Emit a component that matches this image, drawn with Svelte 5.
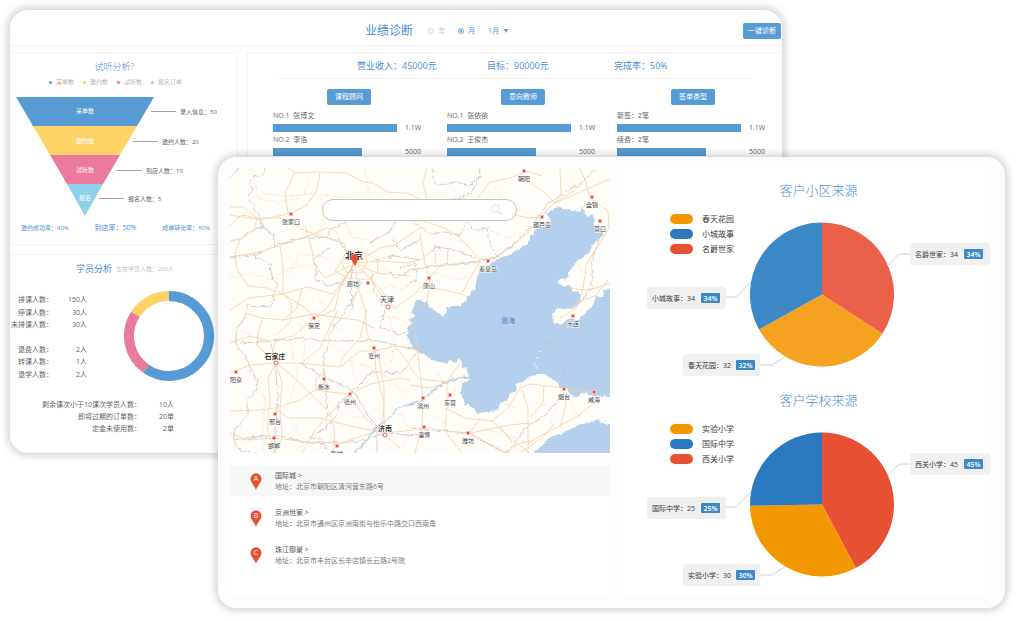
<script>
  let period = 'month';
  let month = '1月';
  let keyword = '';

  const funnelLegend = [
    { name: '采单数', color: '#579bd4' },
    { name: '邀约数', color: '#fdd367' },
    { name: '试听数', color: '#ec7a9c' },
    { name: '报名订单', color: '#8dd2ea' }
  ];

  const funnel = [
    { name: '采单数', note: '录入信息：50', color: '#579bd4', points: '0,0 138,0 121,29 17,29', y: 14, line: 135 },
    { name: '邀约数', note: '邀约人数：20', color: '#fdd367', points: '17,29 121,29 104,58 34,58', y: 44, line: 117 },
    { name: '试听数', note: '到店人数：10', color: '#ec7a9c', points: '34,58 104,58 87,87 51,87', y: 73, line: 101 },
    { name: '报名', note: '报名人数：5', color: '#8dd2ea', points: '51,87 87,87 69,119', y: 101, line: 83 }
  ];

  const students = [
    ['排课人数：', '150人'],
    ['停课人数：', '30人'],
    ['未排课人数：', '30人'],
    ['', ''],
    ['退费人数：', '2人'],
    ['转课人数：', '1人'],
    ['退学人数：', '2人']
  ];

  const orders = [
    ['剩余课次小于10课次学员人数：', '10人'],
    ['即将过期的订单数：', '20单'],
    ['定金未使用数：', '2单']
  ];

  // start / length in degrees, clockwise from the top
  const ring = [
    { start: 0, size: 215, color: '#579bd4' },
    { start: 215, size: 88, color: '#ec7a9c' },
    { start: 303, size: 57, color: '#fdd367' }
  ];

  const rankings = [
    { title: '课程顾问', rows: [['NO.1  张博文', 100, '1.1W'], ['NO.2  李浩', 72, '5000']] },
    { title: '意向教师', rows: [['NO.1  张依依', 100, '1.1W'], ['NO.2  王俊杰', 72, '5000']] },
    { title: '签单类型', rows: [['新签：2笔', 100, '1.1W'], ['续费：2笔', 72, '5000']] }
  ];

  const places = [
    { mark: 'A', name: '国际城', address: '北京市朝阳区清河营东路6号' },
    { mark: 'B', name: '京洲世家', address: '北京市通州区京洲南街与怡乐中路交口西南角' },
    { mark: 'C', name: '珠江御景', address: '北京市丰台区长辛店镇长云路2号院' }
  ];

  const slots = [
    { x: 293, y: 43, w: 80, badge: 347, leader: '271,65 282,54 293,54' },
    { x: 30, y: 87, w: 79, badge: 84, leader: '134,82 119,97 109,97' },
    { x: 66, y: 154, w: 77, badge: 119, leader: '169,156 155,165 143,165' }
  ];

  const sources = [
    {
      title: '客户小区来源',
      legend: ['春天花园', '小城故事', '名爵世家'],
      wedges: [[0, 123, '#eb6049'], [123, 241, '#f4a220'], [241, 360, '#3d88c7']],
      notes: [['名爵世家', 34], ['小城故事', 34], ['春天花园', 32]]
    },
    {
      title: '客户学校来源',
      legend: ['实验小学', '国际中学', '西关小学'],
      wedges: [[0, 152, '#e85034'], [152, 269, '#f39700'], [269, 360, '#2c78be']],
      notes: [['西关小学', 45], ['国际中学', 25], ['实验小学', 30]]
    }
  ];
  const legendColors = ['#f39700', '#2c78be', '#e85034'];

  function wedge(from, to, cx = 205, cy = 94.5, r = 72) {
    const at = (deg) => {
      const a = (deg * Math.PI) / 180;
      return `${cx + r * Math.sin(a)} ${cy - r * Math.cos(a)}`;
    };
    return `M${cx} ${cy}L${at(from)}A${r} ${r} 0 ${to - from > 180 ? 1 : 0} 1 ${at(to)}Z`;
  }

  const cities = [
    { name: '朝阳', x: 294, y: 3 },
    { name: '盘锦', x: 362, y: 29 },
    { name: '葫芦岛', x: 312, y: 49 },
    { name: '营口', x: 370, y: 53 },
    { name: '秦皇岛', x: 258, y: 93 },
    { name: '唐山', x: 199, y: 110 },
    { name: '张家口', x: 61, y: 46 },
    { name: '保定', x: 84, y: 150 },
    { name: '沧州', x: 144, y: 180 },
    { name: '阳泉', x: 6, y: 204 },
    { name: '衡水', x: 94, y: 211 },
    { name: '德州', x: 120, y: 226 },
    { name: '邢台', x: 45, y: 246 },
    { name: '邯郸', x: 44, y: 270 },
    { name: '聊城', x: 107, y: 278 },
    { name: '滨州', x: 193, y: 230 },
    { name: '东营', x: 220, y: 227 },
    { name: '淄博', x: 194, y: 259 },
    { name: '潍坊', x: 238, y: 265 },
    { name: '烟台', x: 334, y: 221 },
    { name: '威海', x: 364, y: 224 },
    { name: '大连', x: 343, y: 148 }
  ];

  const borders = [
    'M35 0L33 7L22 9L20 14L23 20L18 30L27 44L33 59L43 67L45 79L23 87L7 89L0 89',
    'M23 87L40 97L42 109L47 115L43 132L40 139L17 137L15 149L7 160L5 174L10 182L18 192L20 200L28 212L25 222L17 232L17 249L5 262L3 272L10 282L27 285',
    'M0 73L12 70L20 62L33 59M0 9L9 1',
    'M140 74L160 64L162 58L167 52M117 54L100 62L98 69',
    'M87 99L83 92L93 84L100 80M87 99L85 110L97 117L110 115L118 118',
    'M47 77L73 70L97 69L113 75L123 92L121 115L122 142',
    'M203 0L202 8L207 17L227 14L240 18L250 8L249 0M250 8L240 26L220 34',
    'M180 50L200 66L216 64L230 68L237 54L245 62L258 60L260 75L268 89',
    'M145 92L165 88L192 92L205 79L227 82L250 92L268 89L280 79L303 57L318 35L332 27L350 16L367 0',
    'M155 100L165 110L180 102L213 97L250 94',
    'M372 62L366 80L362 92L362 119L350 135',
    'M142 105L145 125L155 142L150 160L170 166L177 164',
    'M10 175L40 173L67 170L100 173L143 172L190 182L187 184L172 205L142 204L122 224',
    'M97 285L92 272L80 270L97 259L96 222L93 195L100 165L123 132L132 110',
    'M45 192L48 230L45 265L44 285M70 195L97 210L122 222L147 260L147 285',
    'M3 272L45 267L80 275L125 274L158 265L190 268',
    'M97 259L108 245L109 232L122 228',
    'M180 260L237 265L257 275L277 285L297 259L315 247L335 225',
    'M323 157L330 182L337 219M311 174L322 174',
    'M170 100L185 95L188 112L175 118M190 72L170 82L163 70'
  ];

  const roads = [
    'M58 0L66 5L90 4L117 5L133 14L143 15L157 24L177 25L190 31',
    'M65 4L55 25L58 45L62 45M90 5L87 22L77 37L62 45L30 52L0 47',
    'M0 39L13 39L27 50L53 50L73 62L97 70L110 74L125 95',
    'M0 57L12 47L27 50L24 62L10 72L5 85L7 102L18 118L37 120L53 126L77 119L103 126L125 95',
    'M0 89L30 84L50 77L73 70L98 60L106 63L112 78L125 95',
    'M50 77L53 99L53 126L62 136L60 155L46 167M75 58L82 82L84 96L95 110L125 95',
    'M0 142L18 130L53 126M53 126L78 142L84 150L97 140L125 95',
    'M125 95L152 93L178 95L190 92M125 95L150 80L165 77L190 60',
    'M125 95L140 110L148 122L158 137M125 95L147 105L180 108M125 95L150 120L166 142',
    'M125 95L110 118L105 142L84 150L63 168L46 172L40 192',
    'M125 95L128 120L135 142L137 165L144 180L146 205L154 235L152 258',
    'M105 103L112 92L116 85L130 83L138 86L147 92L148 104L138 112L118 110Z',
    'M112 95L125 85L137 93L132 105L116 104Z',
    'M197 0L193 15L197 32M248 30L260 14L280 10L297 3L312 8',
    'M290 5L300 15L314 24L325 35L350 24L380 11M330 0L331 27M350 0L356 15L360 30',
    'M190 66L195 97L200 110L197 135L180 145',
    'M312 49L298 65L280 79L265 90L250 92L238 78L228 68L215 60L190 52',
    'M165 140L185 126L199 110L210 98L250 93',
    'M205 82L206 98M218 82L217 96M199 120L215 122L235 127M250 94L240 110L232 125',
    'M285 47L300 50L312 49L320 38L345 22M360 30L378 43L379 60L370 75L357 95L353 120L346 140L330 150',
    'M340 120L352 122L366 120L380 115M340 140L352 132L365 128L378 112',
    'M0 175L20 168L40 173L46 195M0 205L20 197L46 195L70 195L110 199L130 183L144 183L165 178L190 182',
    'M15 145L32 150L53 152L84 146L110 150L128 152L144 160',
    'M32 152L28 165L27 178L46 195L60 206L80 225L100 245L105 265L103 285',
    'M46 195L38 210L40 230L37 260L45 285M46 195L52 215L50 240L52 270L45 285',
    'M0 243L30 242L45 240L70 232L94 216L94 211',
    'M45 240L58 250L90 250L120 258L155 265L185 262L194 259L215 263L240 265L280 257L300 255',
    'M94 205L86 210L86 222L100 224L120 226L140 216L170 210L180 212',
    'M120 226L135 250L147 260L155 267L170 280M120 226L105 240L85 262L72 285M72 195L90 180L108 142',
    'M0 265L18 272L44 270L80 274L110 275L150 262',
    'M178 150L185 165L188 185L190 205L193 230L192 260L185 285',
    'M144 180L150 195L154 220L154 248L155 262M166 180L175 190L183 203L190 211L217 214L230 195',
    'M180 217L200 220L217 214L217 240L215 263L232 285',
    'M215 240L235 250L262 253L278 240L290 220L300 216L335 220L364 224',
    'M240 265L265 280L280 285M262 253L280 270L300 285M292 222L298 240L298 285',
    'M240 265L250 250M298 275L325 260L345 250L364 235L367 226M337 225L335 240L330 260',
    'M290 285L312 270L325 255M314 218L313 235L300 250M270 258L282 275M276 285L290 275L300 273',
    'M53 152L67 140L72 120M110 199L112 190L130 170L137 142'
  ];

  const lanes = [
    'M20 0L28 30L50 34L70 30M0 110L20 105L40 112L60 100L85 96M60 105L70 85L100 90M30 25L55 28L80 26L120 30',
    'M90 30L95 55L88 64M135 2L140 30M165 30L170 50M115 55L122 70L150 72M0 160L20 165L35 185M60 175L68 205L60 235',
    'M70 155L75 180L72 195M100 175L120 190L125 215M160 150L165 175L160 200M130 195L150 205L175 225M110 245L130 250L150 240',
    'M10 190L30 220L10 240M60 250L75 275L60 285M170 245L180 265L170 285M200 245L215 255M20 205L35 230L32 285',
    'M210 30L235 45L260 42M265 20L280 40L300 45M255 60L280 70L300 60M215 70L235 75M340 5L345 20M205 105L225 112L240 108',
    'M250 262L275 265L295 275M305 235L325 240L320 255M340 235L350 250M270 235L285 240L300 230M225 215L222 240M200 195L212 212',
    'M80 5L75 25L60 32M155 45L165 60M140 125L160 118L178 122M90 130L100 155L115 165M345 95L355 105M150 148L168 150L180 158'
  ];

  const sea =
    'M183 139L186 133L190 131L193 134L198 134L199 139L205 142L209 147L213 148L217 144L215 141L223 138L229 138L235 134L239 126L246 120L248 110L249 103L258 97L263 93L272 89L280 87L287 82L293 80L298 75L302 66L308 60L314 58L320 52L317 46L322 41L330 39L336 42L338 41L347 44L351 43L353 38L355 45L358 48L363 46L364 55L367 59L372 60L373 66L366 74L362 77L360 84L352 89L348 92L342 100L339 102L339 109L330 112L328 115L333 118L340 116L342 124L348 123L352 132L345 139L335 141L327 140L323 145L324 157L332 155L338 151L348 153L353 147L363 137L366 128L372 129L375 122L390 118L390 229L380 229L365 227L353 225L345 229L340 227L337 220L330 220L327 213L323 212L315 206L308 206L297 210L292 214L287 215L286 222L280 226L277 232L270 236L268 243L258 244L247 245L242 238L235 236L231 225L232 216L239 211L237 201L233 199L230 191L226 195L220 193L215 195L203 192L195 187L187 184L182 177L177 169L179 165L176 160L182 155L181 150L185 148L182 144ZM390 256L380 256L372 256L368 252L362 254L352 256L343 260L333 265L323 268L317 271L314 276L312 279L306 281L302 292L390 292Z';
</script>

<div class="stage">
  <section class="window back">
    <header class="topbar">
      <h1>业绩诊断</h1>
      <label class="choice" class:dim={period != 'year'}>
        <input type="radio" name="period" value="year" bind:group={period} />年
      </label>
      <label class="choice" class:dim={period != 'month'}>
        <input type="radio" name="period" value="month" bind:group={period} />月
      </label>
      <div class="month">
        <select aria-label="月份" bind:value={month}>
          <option>1月</option>
          <option>2月</option>
          <option>3月</option>
        </select>
        <svg width="4" height="4" viewBox="0 0 4 4"><path d="M0 0H4L2 4Z" fill="#4a8fd0" /></svg>
      </div>
      <button class="btn run">一键诊断</button>
    </header>

    <div class="body">
      <div class="side">
        <section class="card trial">
          <h2>试听分析?</h2>
          <ul class="dots">
            {#each funnelLegend as item}
              <li><i style="background: {item.color}"></i>{item.name}</li>
            {/each}
          </ul>
          <svg class="funnel" width="212" height="120" viewBox="0 0 212 120">
            {#each funnel as step}
              <polygon points={step.points} fill={step.color} />
              <text class="step" x="69" y={step.y + 2}>{step.name}</text>
              <path d="M{step.line} {step.y + 0.5}h25" stroke="#a3a3a3" />
              <text class="note" x={step.line + 29} y={step.y + 3}>{step.note}</text>
            {/each}
          </svg>
          <div class="rates">
            <span>邀约成功率：40%</span>
            <strong>到店率：50%</strong>
            <span>成单转化率：50%</span>
          </div>
        </section>

        <section class="card pupils">
          <div class="heading">
            <h2>学员分析</h2>
            <span>在校学员人数：200人</span>
          </div>
          <div class="split">
            <table class="counts">
              <tbody>
                {#each students as row}
                  <tr><th>{row[0]}</th><td>{row[1]}</td></tr>
                {/each}
              </tbody>
            </table>
            <svg width="90" height="90" viewBox="0 0 90 90">
              {#each ring as arc}
                <circle
                  cx="45" cy="45" r="40" fill="none" stroke={arc.color} stroke-width="10"
                  pathLength="360" stroke-dasharray="{arc.size} 360"
                  transform="rotate({arc.start - 90} 45 45)"
                />
              {/each}
            </svg>
          </div>
          <table class="counts orders">
            <tbody>
              {#each orders as row}
                <tr><th>{row[0]}</th><td>{row[1]}</td></tr>
              {/each}
            </tbody>
          </table>
        </section>
      </div>

      <section class="card results">
        <div class="totals">
          <span>营业收入：45000元</span>
          <span>目标：90000元</span>
          <span>完成率：50%</span>
        </div>
        <div class="rankings">
          {#each rankings as group}
            <div class="ranking">
              <button class="btn">{group.title}</button>
              {#each group.rows as row}
                <div class="who">{row[0]}</div>
                <div class="score">
                  <div class="track"><div class="bar" style="width: {row[1]}%"></div></div>
                  <span>{row[2]}</span>
                </div>
              {/each}
            </div>
          {/each}
        </div>
      </section>
    </div>
  </section>

  <section class="window front">
    <div class="where">
      <div class="map">
        <svg viewBox="0 0 380 285">
          <defs>
            <filter id="rough" filterUnits="userSpaceOnUse" x="-10" y="-10" width="400" height="305" color-interpolation-filters="sRGB">
              <feTurbulence type="fractalNoise" baseFrequency="0.2" numOctaves="2" seed="4" />
              <feDisplacementMap in="SourceGraphic" scale="5" xChannelSelector="R" yChannelSelector="G" />
            </filter>
          </defs>
          <rect width="380" height="285" fill="#fffdf8" />
          <g filter="url(#rough)">
            <path d={sea} fill="#b4d0ed" />
            <path d="M304 195l3 6M308 181l3 2M306 190h2" stroke="#fffdf8" />
            <path d="M125 285L137 272L145 260L160 249L170 239L187 234L193 232L207 220L220 212L235 209L245 211" class="river" />
            {#each lanes as d}<path {d} class="lane" />{/each}
            {#each borders as d}<path {d} class="border" />{/each}
          </g>
          {#each roads as d}<path {d} class="road" />{/each}

          {#each cities as city}
            <rect x={city.x - 2} y={city.y - 2} width="4" height="4" rx="1" fill="#f8b5ac" />
            <rect x={city.x - 1} y={city.y - 1} width="2" height="2" fill="#e8473c" />
            <text x={city.x} y={city.y + 10}>{city.name}</text>
          {/each}
          <rect x="136" y="113" width="4" height="4" rx="1" fill="#f8b5ac" />
          <rect x="137" y="114" width="2" height="2" fill="#e8473c" />
          <text x="123" y="118">廊坊</text>
          <g fill="#fff" stroke="#e8675c">
            <circle cx="158" cy="139" r="2" />
            <circle cx="46" cy="195" r="2" />
            <circle cx="155" cy="267" r="2" />
          </g>
          <text class="mid" x="157" y="134">天津</text>
          <text class="mid dark" x="45" y="191">石家庄</text>
          <text class="mid dark" x="155" y="263">济南</text>
          <text class="water" x="278" y="155">渤海</text>
          <text class="capital" x="124" y="91">北京</text>
          <path d="M125 98C123 94 121 92 121 89.500A3.500 3.500 0 0 1 128 89.500C128 92 127 94 125 98Z" fill="#e85034" />
        </svg>
        <div class="search">
          <input type="text" aria-label="搜索地址" bind:value={keyword} />
          <svg width="12" height="12" viewBox="0 0 12 12" fill="none" stroke="#dedede">
            <circle cx="4.500" cy="4.500" r="3.800" />
            <path d="M7.300 7.300L11 11" stroke-width="1.400" />
          </svg>
        </div>
      </div>

      <ul class="places">
        {#each places as place, i}
          <li class:active={i == 0}>
            <svg width="12" height="17" viewBox="0 0 12 17">
              <path d="M6 17C4.500 12.500 .5 9.500 .5 5.800A5.500 5.500 0 0 1 11.500 5.800C11.500 9.500 7.500 12.500 6 17Z" fill="#e85034" />
              <text x="6" y="8">{place.mark}</text>
            </svg>
            <div>
              <a href="#{place.mark}">{place.name} &gt;</a>
              <p>地址：{place.address}</p>
            </div>
          </li>
        {/each}
      </ul>
    </div>

    <div class="sources">
      {#each sources as source}
        <section class="source">
          <h2>{source.title}</h2>
          <div class="chart">
            <svg viewBox="0 0 374 178">
              {#each source.wedges as [from, to, color]}
                <path d={wedge(from, to)} fill={color} />
              {/each}
              {#each slots as slot, i}
                <polyline points={slot.leader} fill="none" stroke="#d2d2d2" />
                <rect x={slot.x} y={slot.y} width={slot.w} height="22" rx="3" fill="#f0f0f0" />
                <text x={slot.x + 5} y={slot.y + 14}>{source.notes[i][0]}：{source.notes[i][1]}</text>
                <rect x={slot.badge} y={slot.y + 6} width="19" height="10" rx="1" fill="#3d88c7" />
                <text class="percent" x={slot.badge + 9.5} y={slot.y + 14}>{source.notes[i][1]}%</text>
              {/each}
            </svg>
            <ul class="legend">
              {#each source.legend as name, i}
                <li><i style="background: {legendColors[i]}"></i>{name}</li>
              {/each}
            </ul>
          </div>
        </section>
      {/each}
    </div>
  </section>
</div>

<style>
  :global(body) {
    background: #fff;
  }
  .stage {
    display: grid;
    grid-template-columns: 208px 1fr 223px;
    grid-template-rows: 147px auto;
    align-items: start;
    padding: 10px 12px 13px 10px;
    font-family: "Open Sans", "Noto Sans CJK SC", sans-serif;
    font-size: 7px;
    line-height: 12px;
    color: #66625f;
  }
  h1, h2, p, ul {
    margin: 0;
    padding: 0;
    font-weight: 300;
    list-style: none;
  }
  svg {
    display: block;
  }
  .window {
    border-radius: 18px;
    overflow: hidden;
    box-shadow: 0 0 9px 2px rgba(0, 0, 0, 0.2);
  }
  .back {
    grid-column: 1 / 3;
    grid-row: 1 / 3;
    background: #fff;
  }
  .front {
    grid-column: 2 / 4;
    grid-row: 2;
    display: grid;
    grid-template-columns: 380fr 374fr;
    gap: 7px;
    padding: 11px 14px 11px 12px;
    background: #fdfdfd;
  }

  /* top bar */
  .topbar {
    display: flex;
    align-items: center;
    height: 29px;
    padding: 6px 1px 0 46%;
    border-bottom: 1px solid #f3f3f3;
  }
  h1 {
    margin-right: 15px;
    font-size: 12px;
    font-weight: 400;
    line-height: 16px;
    color: #4a8fd0;
  }
  .choice {
    display: flex;
    align-items: center;
    gap: 4px;
    margin-right: 13px;
    color: #4a8fd0;
  }
  .choice.dim {
    color: #c8c8c8;
  }
  .choice input {
    appearance: none;
    box-sizing: border-box;
    width: 6px;
    height: 6px;
    margin: 0;
    border: 1px solid #d5d5d5;
    border-radius: 50%;
  }
  .choice input:checked {
    border-color: #8fb9e2;
    background: #4a8fd0;
    box-shadow: inset 0 0 0 1px #fff;
  }
  .month {
    display: flex;
    align-items: center;
    gap: 4px;
  }
  .month select {
    appearance: none;
    padding: 0;
    border: none;
    background: none;
    font: inherit;
    color: #4a8fd0;
  }
  .btn {
    padding: 0 8px;
    border: none;
    border-radius: 2px;
    background: #579bd4;
    font: inherit;
    line-height: 16px;
    color: #fff;
    cursor: pointer;
  }
  .run {
    margin-left: auto;
    padding: 0 5px;
  }

  .body {
    display: grid;
    grid-template-columns: 228px 1fr;
    gap: 9px;
    margin-top: 6px;
  }
  .card {
    border: 1px solid #f3f3f3;
  }
  h2 {
    font-size: 9px;
    line-height: 14px;
    color: #4a8fd0;
  }

  /* funnel */
  .trial {
    border-left: none;
    padding: 7px 0 10px;
    margin-bottom: 9px;
  }
  .trial h2 {
    padding-right: 18px;
    text-align: center;
  }
  .dots {
    display: flex;
    gap: 9px;
    padding: 2px 0 0 39px;
    font-size: 6px;
    line-height: 12px;
    color: #8d8a88;
  }
  .dots li {
    display: flex;
    align-items: center;
    gap: 4px;
  }
  .dots i {
    width: 3px;
    height: 3px;
    border-radius: 50%;
  }
  .funnel {
    margin: 9px 0 0 6px;
    font-size: 6px;
  }
  .funnel .step {
    fill: #fff;
    text-anchor: middle;
  }
  .funnel .note {
    fill: #66625f;
  }
  .rates {
    display: flex;
    justify-content: space-between;
    padding: 5px 27px 0 11px;
    font-size: 6px;
    color: #4a8fd0;
  }
  .rates strong {
    font-size: 7px;
    font-weight: 400;
  }

  /* pupils */
  .pupils {
    border-left: none;
    border-bottom: none;
    padding: 7px 0 18px;
  }
  .heading {
    display: flex;
    align-items: center;
    gap: 4px;
    padding-left: 66px;
    font-size: 6px;
    color: #c4c4c4;
  }
  .pupils h2 {
    font-weight: 400;
  }
  .split {
    display: flex;
    gap: 37px;
    margin-top: 15px;
  }
  .counts {
    width: 77px;
    margin-top: 3px;
    border-collapse: collapse;
  }
  .counts th, .counts td {
    height: 12px;
    padding: 0;
    font-weight: 400;
    text-align: right;
    white-space: nowrap;
  }
  .counts th {
    width: 43px;
  }
  .orders {
    width: 164px;
    margin-top: 18px;
  }
  .orders th {
    width: 131px;
  }

  /* results */
  .results {
    border-right: none;
    border-bottom: none;
  }
  .totals {
    display: grid;
    grid-template-columns: 130fr 127fr 138fr;
    margin: 0 30px 0 29px;
    padding: 6px 0 5px 80px;
    border-bottom: 1px solid #f3f3f3;
    font-size: 9px;
    line-height: 14px;
    color: #4a8fd0;
  }
  .rankings {
    display: grid;
    grid-template-columns: 174fr 170fr 152fr;
    padding: 10px 13px 0 25px;
  }
  .ranking {
    width: 152px;
    text-align: center;
  }
  .ranking .btn {
    display: block;
    margin: 0 auto 5px;
  }
  .who {
    text-align: left;
    white-space: pre;
  }
  .score {
    display: flex;
    align-items: center;
    gap: 8px;
  }
  .track {
    width: 124px;
  }
  .bar {
    height: 8px;
    background: #579bd4;
  }

  /* map */
  .where {
    border-radius: 8px;
    background: #fff;
  }
  .map {
    position: relative;
  }
  .map > svg {
    width: 100%;
  }
  .road, .lane, .border, .river {
    fill: none;
  }
  .road {
    stroke: #f6cfa6;
    stroke-width: 0.8;
  }
  .lane {
    stroke: #f9eeda;
  }
  .border {
    stroke: #c4c4c4;
    stroke-width: 0.8;
  }
  .river {
    stroke: #b4d0ed;
    stroke-width: 1.4;
  }
  .map text {
    font-size: 6px;
    text-anchor: middle;
    fill: #444;
    stroke: #fff;
    stroke-width: 1px;
    paint-order: stroke;
  }
  .map text.mid {
    font-size: 7px;
  }
  .map text.dark {
    fill: #111;
    font-weight: 500;
  }
  .map text.capital {
    font-size: 9px;
    font-weight: 500;
    fill: #111;
  }
  .map text.water {
    font-size: 7px;
    fill: #4a87cf;
    stroke: none;
  }
  .search {
    position: absolute;
    top: 31px;
    left: 92px;
    display: flex;
    align-items: center;
    box-sizing: border-box;
    width: 195px;
    height: 22px;
    padding: 0 13px 0 12px;
    border: 1px solid #c4c4c4;
    border-radius: 11px;
    background: #fff;
  }
  .search input {
    flex: 1;
    min-width: 0;
    border: none;
    outline: none;
    background: none;
    font: inherit;
  }

  /* places */
  .places {
    display: grid;
    gap: 7px;
    margin-top: 13px;
    font-weight: 400;
  }
  .places li {
    display: flex;
    align-items: center;
    gap: 13px;
    height: 30px;
    padding-left: 20px;
    line-height: 11px;
    color: #7d7a78;
  }
  .places li.active {
    background: #f8f8f8;
  }
  .places p {
    font-weight: 400;
  }
  .places text {
    font-size: 7px;
    fill: #fff;
    text-anchor: middle;
  }
  .places a {
    display: block;
    color: #55514e;
    text-decoration: none;
  }

  /* sources */
  .sources {
    padding-bottom: 9px;
    border-radius: 8px;
    background: #fff;
  }
  .source {
    padding-top: 12px;
  }
  .source h2 {
    padding-left: 29px;
    font-size: 13px;
    line-height: 20px;
    text-align: center;
  }
  .chart {
    display: grid;
  }
  .chart > svg, .legend {
    grid-area: 1 / 1;
  }
  .chart > svg {
    width: 100%;
  }
  .chart text {
    font-size: 7px;
    fill: #3d3937;
  }
  .chart text.percent {
    fill: #fff;
    font-weight: 600;
    text-anchor: middle;
  }
  .legend {
    padding: 11px 0 0 53px;
    font-size: 8px;
    font-weight: 400;
    line-height: 15px;
    color: #3d3937;
  }
  .legend li {
    display: flex;
    align-items: center;
    gap: 9px;
  }
  .legend i {
    width: 23px;
    height: 10px;
    border-radius: 5px;
  }
</style>
